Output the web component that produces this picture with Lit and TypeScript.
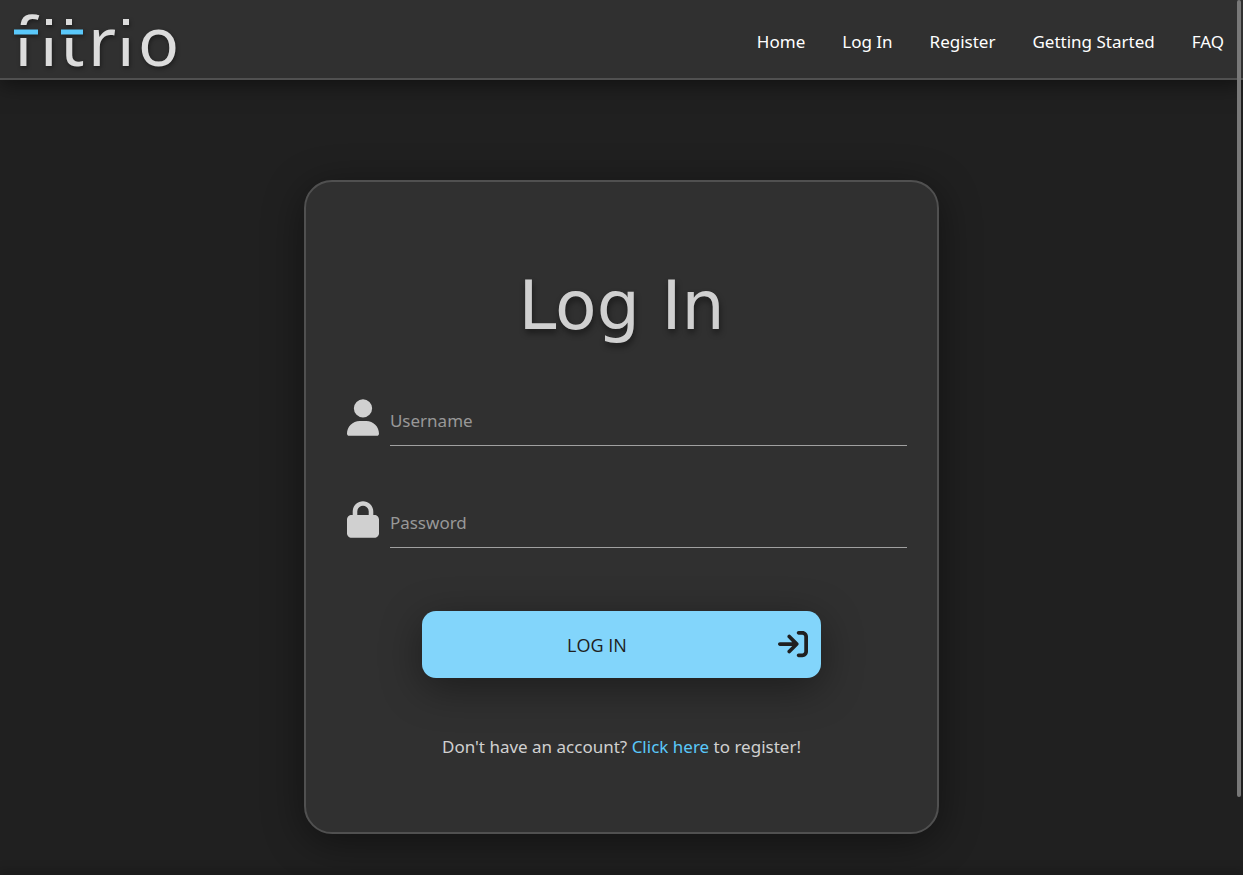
import { LitElement, html, css, svg } from "lit";
import { customElement } from "lit/decorators.js";

const userPath = svg`<path d="M224 256A128 128 0 1 0 224 0a128 128 0 1 0 0 256zm-45.7 48C79.8 304 0 383.8 0 482.3C0 498.7 13.3 512 29.7 512H418.3c16.4 0 29.7-13.3 29.7-29.7C448 383.8 368.2 304 269.7 304H178.3z"/>`;
const lockPath = svg`<path d="M144 144v48H304V144c0-44.2-35.8-80-80-80s-80 35.8-80 80zM80 192V144C80 64.5 144.5 0 224 0s144 64.5 144 144v48h16c35.3 0 64 28.7 64 64V448c0 35.3-28.7 64-64 64H64c-35.3 0-64-28.7-64-64V256c0-35.3 28.7-64 64-64H80z"/>`;

@customElement("site-header")
export class SiteHeader extends LitElement {
  static styles = css`
    :host { display: block; position: relative; z-index: 1; }
    .bar {
      box-sizing: border-box;
      min-height: 80px;
      display: flex;
      align-items: center;
      justify-content: space-between;
      padding: 0 19px 0 8px;
      background: #303030;
      border-bottom: 2px solid #505050;
      box-shadow: 0 4px 20px rgba(0, 0, 0, 0.5);
    }
    .brand { display: block; }
    .logo {
      display: block;
      width: 176px;
      height: 78px;
      overflow: visible;
      filter: drop-shadow(1px 2px 2px rgba(0, 0, 0, 0.4));
    }
    .word { font: 68px "Noto Sans", sans-serif; fill: #dcdcdc; }
    .dots { fill: #dcdcdc; }
    .dash { fill: #5ac8fa; }
    .links { display: flex; gap: 37px; padding-top: 6px; }
    .link {
      font-size: 17px;
      line-height: 24px;
      color: #fff;
      text-decoration: none;
      white-space: nowrap;
    }
  `;

  render() {
    return html`
      <header class="bar">
        <a class="brand" href="#" aria-label="fitrio home">
          <svg class="logo" viewBox="8 0 176 78">
            <mask id="cut" maskUnits="userSpaceOnUse" x="0" y="0" width="190" height="78">
              <rect width="190" height="78" fill="#fff" />
              <rect x="8" y="25" width="81" height="13" />
              <rect x="42" y="8" width="47" height="30" />
              <rect x="120" y="8" width="16" height="30" />
            </mask>
            <text class="word" mask="url(#cut)" y="66" x="13 40 60 88 117 138">fitrio</text>
            <path class="dots" d="M46 19h6v6h-6zM66 19h6v6h-6zM123 19h6v6h-6z" />
            <path class="dash" d="M14 29.5h24v5h-24zM61 29.5h22v5h-22z" />
          </svg>
        </a>
        <nav class="links">
          ${["Home", "Log In", "Register", "Getting Started", "FAQ"].map(
            (label) => html`<a class="link" href="#">${label}</a>`
          )}
        </nav>
      </header>
    `;
  }
}

@customElement("login-card")
export class LoginCard extends LitElement {
  static styles = css`
    :host { display: block; }
    .card {
      box-sizing: border-box;
      padding: 82px 30px 73px;
      background: #303030;
      border: 2px solid #505050;
      border-radius: 28px;
      box-shadow: 0 8px 40px rgba(0, 0, 0, 0.45);
      color: #d0d0d0;
    }
    .title {
      margin: 0 0 48px;
      text-align: center;
      font: 68px/84px "DejaVu Sans", sans-serif;
      text-shadow: 1px 4px 6px rgba(0, 0, 0, 0.45);
    }
    .fields { display: grid; gap: 52px; }
    .field {
      display: grid;
      grid-template-columns: 32px 1fr;
      align-items: center;
      gap: 11px;
      padding-left: 11px;
    }
    .glyph { display: block; width: 32px; height: 37px; margin-bottom: 8px; fill: #d0d0d0; }
    .input {
      box-sizing: border-box;
      width: 100%;
      height: 50px;
      padding: 0;
      border: 0;
      border-bottom: 1px solid #a0a0a0;
      border-radius: 0;
      outline: 0;
      background: none;
      color: #d0d0d0;
      font: 17px "Noto Sans", sans-serif;
    }
    .input::placeholder { color: #989898; opacity: 1; }
    .submit {
      display: flex;
      align-items: center;
      gap: 6px;
      width: 70%;
      min-height: 67px;
      margin: 63px auto 57px;
      padding: 0 13px 0 0;
      border: 0;
      border-radius: 14px;
      background: #82d5fb;
      color: #202020;
      font: 18px "Open Sans", sans-serif;
      box-shadow: 0 10px 40px rgba(0, 0, 0, 0.4);
      cursor: pointer;
    }
    .label { flex: 1; text-align: center; }
    .enter { width: 30px; height: 30px; margin-bottom: 2px; fill: currentColor; }
    .hint { margin: 0; text-align: center; font-size: 17px; line-height: 24px; }
    .hint-link { color: #5ac8fa; text-decoration: none; }
  `;

  render() {
    return html`
      <form class="card" @submit=${(e: Event) => e.preventDefault()}>
        <h1 class="title">Log In</h1>
        <div class="fields">
          <div class="field">
            <label for="username" aria-label="Username">
              <svg class="glyph" viewBox="0 0 448 512">${userPath}</svg>
            </label>
            <input class="input" id="username" type="text" placeholder="Username" />
          </div>
          <div class="field">
            <label for="password" aria-label="Password">
              <svg class="glyph" viewBox="0 0 448 512">${lockPath}</svg>
            </label>
            <input class="input" id="password" type="password" placeholder="Password" />
          </div>
        </div>
        <button class="submit" type="submit">
          <span class="label">LOG IN</span>
          <svg class="enter" viewBox="0 0 512 512" aria-hidden="true">
            <path d="M352 96l64 0c17.7 0 32 14.3 32 32l0 256c0 17.7-14.3 32-32 32l-64 0c-17.7 0-32 14.3-32 32s14.3 32 32 32l64 0c53 0 96-43 96-96l0-256c0-53-43-96-96-96l-64 0c-17.7 0-32 14.3-32 32s14.3 32 32 32zm-9.4 182.6c12.5-12.5 12.5-32.8 0-45.3l-128-128c-12.5-12.5-32.8-12.5-45.3 0s-12.5 32.8 0 45.3L242.7 224 32 224c-17.7 0-32 14.3-32 32s14.3 32 32 32l210.7 0-73.4 73.4c-12.5 12.5-12.5 32.8 0 45.3s32.8 12.5 45.3 0l128-128z" />
          </svg>
        </button>
        <p class="hint">Don't have an account? <a class="hint-link" href="#">Click here</a> to register!</p>
      </form>
    `;
  }
}

@customElement("app-root")
export class AppRoot extends LitElement {
  static styles = css`
    :host {
      display: flex;
      flex-direction: column;
      position: relative;
      min-height: 100vh;
      overflow: hidden;
      background: #202020;
      font-family: "Noto Sans", sans-serif;
    }
    .main { flex: 1; padding-top: 100px; }
    .card { width: 51.1%; min-width: 320px; margin: 0 auto; }
    .edge { box-shadow: 0 0 12px 2px rgba(0, 0, 0, 0.45); }
    .thumb {
      position: absolute;
      z-index: 2;
      top: 0;
      right: 2px;
      width: 4px;
      height: 91.1%;
      border-radius: 2px;
      background: #787878;
    }
  `;

  render() {
    return html`
      <site-header></site-header>
      <main class="main"><login-card class="card"></login-card></main>
      <footer class="edge"></footer>
      <div class="thumb"></div>
    `;
  }
}
